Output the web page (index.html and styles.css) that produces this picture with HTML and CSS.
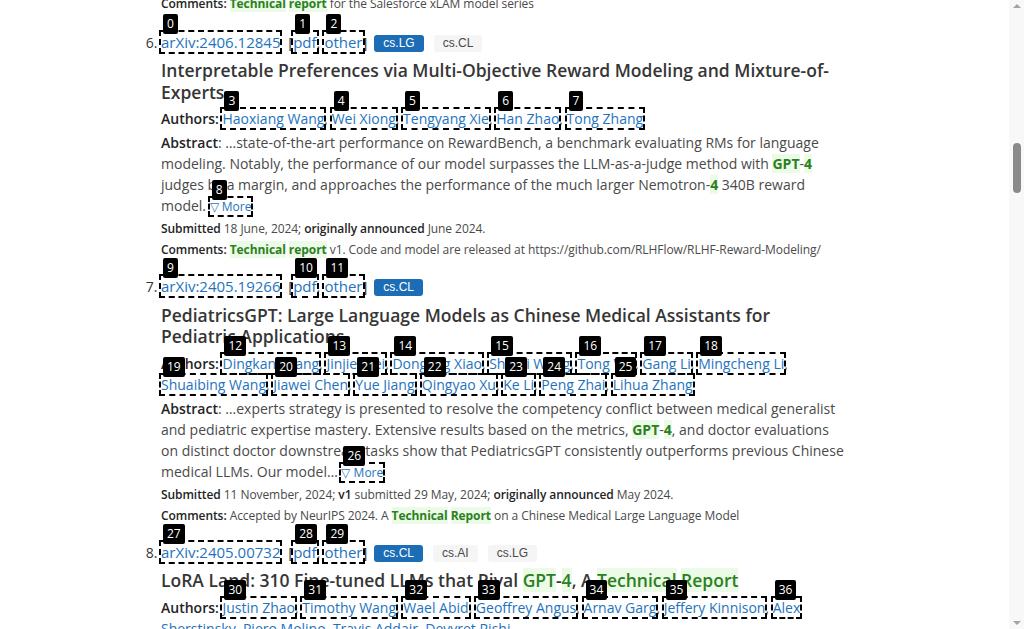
FILE: index.html
```html
<!DOCTYPE html>
<html lang="en">
<head>
<meta charset="utf-8">
<title>arXiv search results</title>
<link rel="stylesheet" href="styles.css">
</head>
<body>
<div class="viewport">
  <div class="page">
    <main class="results">
      <p class="meta prev-tail"><span class="lbl">Comments:</span> <span class="hit">Technical</span> <span class="hit">report</span> for the Salesforce xLAM model series</p>
      <ol class="list" start="6">
        <li class="result">
          <p class="list-title"><a href="#" class="mark" data-n="0">arXiv:2406.12845</a> &nbsp;[<a href="#" class="mark" data-n="1">pdf</a>, <a href="#" class="mark" data-n="2">other</a>]&nbsp;<span class="tags"><span class="tag tag-link">cs.LG</span><span class="tag">cs.CL</span></span></p>
          <p class="title">Interpretable Preferences via Multi-Objective Reward Modeling and Mixture-of-Experts</p>
          <p class="authors"><span class="lbl">Authors:</span> <a href="#" class="mark" data-n="3">Haoxiang Wang</a>, <a href="#" class="mark" data-n="4">Wei Xiong</a>, <a href="#" class="mark" data-n="5">Tengyang Xie</a>, <a href="#" class="mark" data-n="6">Han Zhao</a>, <a href="#" class="mark" data-n="7">Tong Zhang</a></p>
          <p class="abstract"><span class="lbl">Abstract</span>: …state-of-the-art performance on RewardBench, a benchmark evaluating RMs for language modeling. Notably, the performance of our model surpasses the LLM-as-a-judge method with <span class="hit">GPT</span>-<span class="hit">4</span> judges by a margin, and approaches the performance of the much larger Nemotron-<span class="hit">4</span> 340B reward model. <a href="#" class="mark more" data-n="8">▽ More</a></p>
          <p class="meta"><span class="lbl">Submitted</span> 18 June, 2024; <span class="lbl">originally announced</span> June 2024.</p>
          <p class="meta"><span class="lbl">Comments:</span> <span class="hit">Technical</span> <span class="hit">report</span> v1. Code and model are released at https://github.com/RLHFlow/RLHF-Reward-Modeling/</p>
        </li>
        <li class="result">
          <p class="list-title"><a href="#" class="mark" data-n="9">arXiv:2405.19266</a> &nbsp;[<a href="#" class="mark" data-n="10">pdf</a>, <a href="#" class="mark" data-n="11">other</a>]&nbsp;<span class="tags"><span class="tag tag-link">cs.CL</span></span></p>
          <p class="title">PediatricsGPT: Large Language Models as Chinese Medical Assistants for Pediatric Applications</p>
          <p class="authors"><span class="lbl">Authors:</span> <a href="#" class="mark" data-n="12">Dingkang Yang</a>, <a href="#" class="mark" data-n="13">Jinjie Wei</a>, <a href="#" class="mark" data-n="14">Dongling Xiao</a>, <a href="#" class="mark" data-n="15">Shunli Wang</a>, <a href="#" class="mark" data-n="16">Tong Wu</a>, <a href="#" class="mark" data-n="17">Gang Li</a>, <a href="#" class="mark" data-n="18">Mingcheng Li</a>, <a href="#" class="mark" data-n="19">Shuaibing Wang</a>, <a href="#" class="mark" data-n="20">Jiawei Chen</a>, <a href="#" class="mark" data-n="21">Yue Jiang</a>, <a href="#" class="mark" data-n="22">Qingyao Xu</a>, <a href="#" class="mark" data-n="23">Ke Li</a>, <a href="#" class="mark" data-n="24">Peng Zhai</a>, <a href="#" class="mark" data-n="25">Lihua Zhang</a></p>
          <p class="abstract"><span class="lbl">Abstract</span>: …experts strategy is presented to resolve the competency conflict between medical generalist and pediatric expertise mastery. Extensive results based on the metrics, <span class="hit">GPT</span>-<span class="hit">4</span>, and doctor evaluations on distinct doctor downstream tasks show that PediatricsGPT consistently outperforms previous Chinese medical LLMs. Our model… <a href="#" class="mark more" data-n="26">▽ More</a></p>
          <p class="meta"><span class="lbl">Submitted</span> 11 November, 2024; <span class="lbl">v1</span> submitted 29 May, 2024; <span class="lbl">originally announced</span> May 2024.</p>
          <p class="meta"><span class="lbl">Comments:</span> Accepted by NeurIPS 2024. A <span class="hit">Technical</span> <span class="hit">Report</span> on a Chinese Medical Large Language Model</p>
        </li>
        <li class="result">
          <p class="list-title"><a href="#" class="mark" data-n="27">arXiv:2405.00732</a> &nbsp;[<a href="#" class="mark" data-n="28">pdf</a>, <a href="#" class="mark" data-n="29">other</a>]&nbsp;<span class="tags"><span class="tag tag-link">cs.CL</span><span class="tag">cs.AI</span><span class="tag">cs.LG</span></span></p>
          <p class="title">LoRA Land: 310 Fine-tuned LLMs that Rival <span class="hit">GPT</span>-<span class="hit">4</span>, A <span class="hit">Technical</span> <span class="hit">Report</span></p>
          <p class="authors"><span class="lbl">Authors:</span> <a href="#" class="mark" data-n="30">Justin Zhao</a>, <a href="#" class="mark" data-n="31">Timothy Wang</a>, <a href="#" class="mark" data-n="32">Wael Abid</a>, <a href="#" class="mark" data-n="33">Geoffrey Angus</a>, <a href="#" class="mark" data-n="34">Arnav Garg</a>, <a href="#" class="mark" data-n="35">Jeffery Kinnison</a>, <a href="#" class="mark" data-n="36">Alex</a><a href="#"> Sherstinsky</a>, <a href="#">Piero Molino</a>, <a href="#">Travis Addair</a>, <a href="#">Devvret Rishi</a></p>
        </li>
      </ol>
    </main>
  </div>
  <div class="scrollbar" aria-hidden="true">
    <span class="sb-up"></span>
    <span class="sb-track"><span class="sb-thumb"></span></span>
    <span class="sb-down"></span>
  </div>
</div>
</body>
</html>
```

FILE: styles.css
```css
html, body {
  margin: 0;
  padding: 0;
  background: #fff;
}

body {
  font-family: "Open Sans", "Noto Sans", sans-serif;
  font-size: 14px;
  line-height: 1.5;
  color: #4a4a4a;
}

.viewport {
  display: flex;
  height: 629px;
  overflow: hidden;
}

.page {
  flex: 1;
  overflow: hidden;
}

.results {
  width: 686px;
  margin: -5px 0 0 161px;
}

p {
  margin: 0;
}

a {
  color: #1e73be;
  text-decoration: none;
}

.list {
  margin: 0;
  padding: 0;
}

.result {
  padding-bottom: 14px;
}

.result::marker {
  color: #363636;
}

.lbl {
  color: #242424;
  font-weight: 600;
}

.hit {
  background: #ecfbe7;
  color: #2b8021;
  font-weight: 700;
}

.title .hit {
  font-weight: 600;
}

/* header line: id, links, tags */
.list-title {
  height: 21px;
  line-height: 21px;
  margin-bottom: 7.5px;
  color: #363636;
  font-size: 15px;
}

.tags {
  display: inline-flex;
  gap: 10px;
  margin-left: 3px;
  vertical-align: middle;
}

.tag {
  display: inline-block;
  height: 17px;
  line-height: 17px;
  padding: 0 9px;
  border-radius: 3px;
  background: #f5f5f5;
  color: #4a4a4a;
  font-family: "Liberation Sans", Arial, sans-serif;
  font-size: 12px;
}

.tag-link {
  background: #1c6db5;
  color: #fff;
}

.title {
  font-size: 17.5px;
  line-height: 21.5px;
  font-weight: 600;
  color: #363636;
  margin-bottom: 5px;
}

.authors {
  margin-bottom: 3px;
}

.abstract {
  margin-bottom: 4px;
}

.more {
  font-size: 12px;
}

.meta {
  font-size: 12px;
  line-height: 18px;
  letter-spacing: -0.07px;
  margin-bottom: 3px;
}

.meta.prev-tail {
  margin-bottom: 18.5px;
}

/* annotation overlay */
.mark {
  position: relative;
  outline: 2px dashed #000;
}

.mark::before {
  content: attr(data-n);
  position: absolute;
  left: 2px;
  bottom: calc(100% - 2px);
  height: 20px;
  line-height: 20px;
  padding: 0 4px;
  border-radius: 2px;
  background: #000;
  color: #fff;
  font-family: "Open Sans", sans-serif;
  font-size: 12px;
  font-weight: 400;
  letter-spacing: 0;
  white-space: nowrap;
}

/* scrollbar */
.scrollbar {
  width: 15px;
  flex: none;
  background: #f8f8f8;
  display: flex;
  flex-direction: column;
  align-items: center;
}

.sb-up,
.sb-down {
  width: 0;
  height: 0;
  border-left: 4px solid transparent;
  border-right: 4px solid transparent;
  margin: 4px 0;
}

.sb-up {
  border-bottom: 4px solid #a3a3a3;
}

.sb-down {
  border-top: 4px solid #a3a3a3;
}

.sb-track {
  flex: 1;
  display: flex;
  flex-direction: column;
  align-items: center;
}

.sb-thumb {
  width: 8px;
  height: 50px;
  margin-top: 131px;
  border-radius: 4px;
  background: #8a8a8a;
}
```
